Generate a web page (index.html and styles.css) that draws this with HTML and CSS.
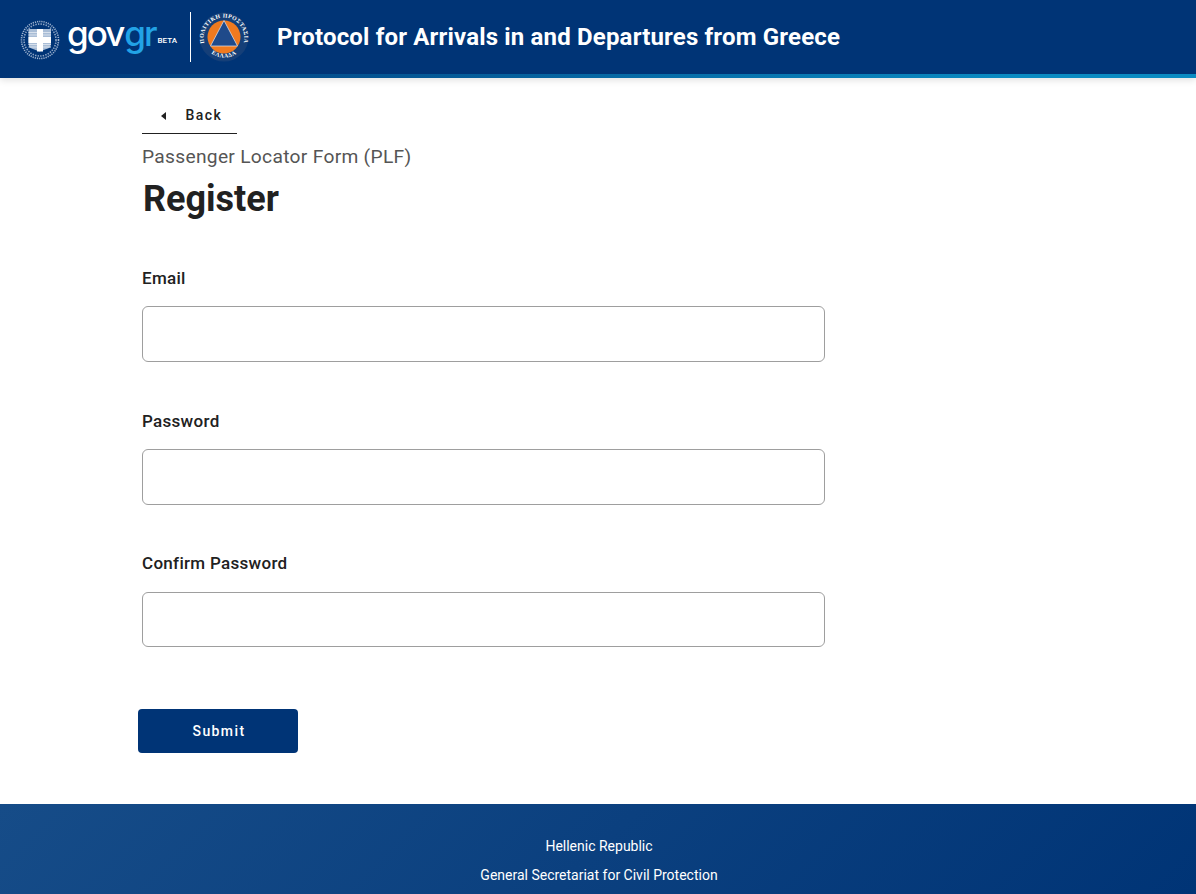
FILE: index.html
```html
<!DOCTYPE html>
<html lang="en">
<head>
<meta charset="utf-8">
<title>Register</title>
<link rel="stylesheet" href="styles.css">
</head>
<body>
<header class="header">
  <div class="logos">
    <svg class="emblem" width="40" height="40" viewBox="0 0 40 40" aria-hidden="true">
      <circle cx="20" cy="20" r="18.5" fill="none" stroke="#9fb4d0" stroke-width="1.6" stroke-dasharray="1.2 1"/>
      <circle cx="20" cy="20" r="16" fill="none" stroke="#8ea6c6" stroke-width="1.6" stroke-dasharray="1.4 1.2"/>
      <path d="M8.5 9h22.5v15q0 3-2.500 4.200l-9 3.300-8.500-3.300q-2.500-1.200-2.500-4.200z" fill="#a9bdd6"/>
      <path d="M8.500 12.500H17M8.500 15H17M23 12.500H31M23 15H31M8.500 24.500H17M8.500 27H17M23 24.500H31M23 27H31" stroke="#d7e0ec" stroke-width="1"/>
      <path d="M17 9h6v8h8v6h-8v8.500h-6V23H8.500v-6H17z" fill="#fff"/>
    </svg>
    <div class="wordmark"><span class="gov">gov</span><span class="gr">gr</span><span class="beta">BETA</span></div>
    <div class="divider"></div>
    <svg class="civil" width="50" height="50" viewBox="0 0 50 50" aria-hidden="true">
      <circle cx="25" cy="25" r="24.500" fill="#153f78"/>
      <circle cx="25" cy="25" r="16.500" fill="#f07a1f"/>
      <path d="M25 8.500 38.500 34H11.500z" fill="#1f4a8a" stroke="#dfe7f2" stroke-width=".7"/>
      <defs>
        <path id="arcTop" d="M5.500 31.500A20.300 20.300 0 1 1 44.500 31.500"/>
        <path id="arcBottom" d="M11 40.500A21.700 21.700 0 0 0 39 40.500"/>
      </defs>
      <text class="civil-text"><textPath href="#arcTop" startOffset="50%" text-anchor="middle">ΠΟΛΙΤΙΚΗ ΠΡΟΣΤΑΣΙΑ</textPath></text>
      <text class="civil-text"><textPath href="#arcBottom" startOffset="50%" text-anchor="middle">ΕΛΛΑΔΑ</textPath></text>
    </svg>
  </div>
  <h1 class="site-title">Protocol for Arrivals in and Departures from Greece</h1>
</header>
<main class="main">
  <a class="back" href="#"><span class="back-arrow"></span>Back</a>
  <p class="caption">Passenger Locator Form (PLF)</p>
  <h2 class="heading">Register</h2>
  <form class="form">
    <div class="field">
      <label class="label" for="email">Email</label>
      <input class="input" id="email" type="email">
    </div>
    <div class="field">
      <label class="label" for="password">Password</label>
      <input class="input" id="password" type="password">
    </div>
    <div class="field">
      <label class="label" for="confirm">Confirm Password</label>
      <input class="input" id="confirm" type="password">
    </div>
    <button class="submit" type="button">Submit</button>
  </form>
</main>
<footer class="footer">
  <p class="footer-line">Hellenic Republic</p>
  <p class="footer-line">General Secretariat for Civil Protection</p>
</footer>
</body>
</html>
```
FILE: styles.css
```css
* { box-sizing: border-box; }
html, body { margin: 0; padding: 0; }
body {
  font-family: Roboto, "Liberation Sans", sans-serif;
  color: #212121;
  background: #fff;
  height: 894px;
  overflow: hidden;
}
.header {
  height: 78px;
  background: linear-gradient(90deg, #003476 0%, #0a8bc2 85%) bottom / 100% 4px no-repeat, #003476;
  box-shadow: 0 2px 7px rgba(0, 0, 0, .13);
  display: flex;
  align-items: center;
  padding: 0 0 4px 20px;
}
.logos { display: flex; align-items: center; }
.emblem { display: block; flex: none; margin-top: 6px; }
.wordmark {
  margin-left: 7px;
  width: 115px;
  font-family: Inter, Roboto, sans-serif;
  font-size: 35px;
  font-weight: 500;
  line-height: 40px;
  letter-spacing: -2px;
  white-space: nowrap;
  margin-top: 0;
}
.gov { color: #fff; }
.gr { color: #22a3e6; margin-left: 1px; }
.beta {
  font-family: Roboto, sans-serif;
  font-size: 8px;
  font-weight: 500;
  letter-spacing: 0;
  color: #fff;
  margin-left: 2px;
  vertical-align: 3px;
}
.divider { width: 1px; height: 50px; background: #fff; margin-left: 8px; }
.civil { display: block; margin-left: 8px; flex: none; }
.civil-text { font-family: "Liberation Serif", serif; font-size: 5.800px; font-weight: 700; fill: #fff; letter-spacing: .45px; }
.site-title {
  margin: 0 0 0 28px;
  font-size: 24px;
  font-weight: 700;
  line-height: 30px;
  letter-spacing: .17px;
  color: #fff;
}
.main {
  height: 726px;
  padding: 0 0 0 142px;
}
.back {
  display: flex;
  align-items: center;
  width: 95px;
  height: 56px;
  padding: 18px 0 0 19px;
  border-bottom: 1px solid #212121;
  color: #212121;
  font-size: 14px;
  font-weight: 500;
  letter-spacing: 1.400px;
  text-decoration: none;
}
.back-arrow {
  width: 0;
  height: 0;
  border-top: 4.500px solid transparent;
  border-bottom: 4.500px solid transparent;
  border-right: 5.500px solid #212121;
  margin: 2px 19.500px 0 0;
}
.caption {
  margin: 11px 0 0;
  font-size: 19.200px;
  line-height: 24px;
  letter-spacing: .3px;
  color: #555;
}
.heading {
  margin: 8px 0 0 1px;
  font-size: 36px;
  font-weight: 700;
  line-height: 44px;
}
.form { width: 683px; margin-top: 44.900px; }
.field { margin-bottom: 46.700px; }
.label {
  display: block;
  font-size: 17px;
  font-weight: 500;
  line-height: 24px;
  letter-spacing: .3px;
  margin-bottom: 16.300px;
}
.input {
  display: block;
  width: 100%;
  height: 55.700px;
  border: 1px solid #9e9e9e;
  border-radius: 6px;
  background: #fff;
  outline: none;
}
.submit {
  display: block;
  width: 160px;
  height: 44px;
  margin: 61.700px 0 0 -4px;
  padding: 0 0 0 2px;
  border: 0;
  border-radius: 4px;
  background: #003476;
  color: #fff;
  font-family: inherit;
  font-size: 14px;
  font-weight: 500;
  letter-spacing: 1.400px;
}
.footer {
  height: 90px;
  background: linear-gradient(135deg, #164c88 0%, #003476 100%);
  padding: 32px 0 0 2px;
  text-align: center;
  color: #fff;
  font-size: 14px;
}
.footer-line { margin: 0 0 9px; line-height: 20px; }
```
